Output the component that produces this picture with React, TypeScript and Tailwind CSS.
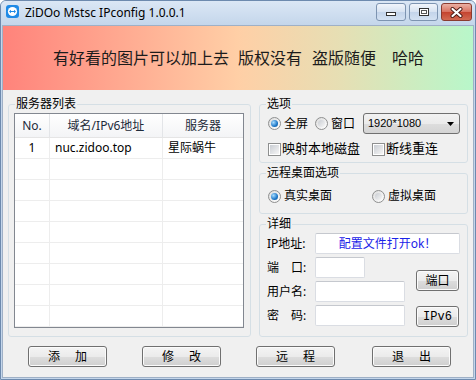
import type { ReactNode } from 'react'

const cjk = "font-['Noto_Sans','Noto_Sans_CJK_SC',sans-serif]"

function Radio({ checked }: { checked?: boolean }) {
  return (
    <span className="flex h-[13px] w-[13px] shrink-0 items-center justify-center rounded-full border border-[#8e8f8f] bg-[linear-gradient(135deg,#dcdcdc,#ffffff)]">
      {checked ? (
        <span className="h-[7px] w-[7px] rounded-full bg-[radial-gradient(circle_at_35%_35%,#a8ddff,#1d77c8_60%,#0b4d89)]" />
      ) : (
        <span className="h-[7px] w-[7px] rounded-full bg-[linear-gradient(135deg,#c9cdd3,#f6f6f6)]" />
      )}
    </span>
  )
}

function Check() {
  return (
    <span className="flex h-[13px] w-[13px] shrink-0 items-center justify-center border border-[#8e8f8f] bg-white">
      <span className="h-[9px] w-[9px] bg-[linear-gradient(135deg,#c9cdd3,#f6f6f6)]" />
    </span>
  )
}

function Group({ title, className, children }: { title: string; className: string; children: ReactNode }) {
  return (
    <fieldset className={`rounded-[3px] border border-[#d5dfe5] ${className}`}>
      <legend className="ml-[6px] px-[1px] text-[12px] leading-[14px] text-black">{title}</legend>
      {children}
    </fieldset>
  )
}

function WinButton({ children, className }: { children: ReactNode; className: string }) {
  return (
    <div
      className={`flex h-[21px] items-center justify-center rounded-[3px] border border-[#707070] bg-[linear-gradient(to_bottom,#f4f4f4_0%,#ebebeb_50%,#dddddd_51%,#cfcfcf_100%)] text-[12px] text-black shadow-[inset_0_0_0_1px_#fbfbfb] ${className}`}
    >
      {children}
    </div>
  )
}

function TextBox({ className, children }: { className: string; children?: ReactNode }) {
  return (
    <div className={`flex h-[21px] items-center justify-center rounded-[2px] border border-[#dadde3] border-t-[#c5c8ce] bg-white ${className}`}>
      {children}
    </div>
  )
}

const rows = Array.from({ length: 9 }, (_, i) => i)

export default function App() {
  return (
    <div className={`h-[380px] w-[476px] overflow-hidden rounded-t-[6px] border border-[#6d8aae] bg-[#c4d6eb] ${cjk}`}>
      {/* title bar */}
      <div className="flex h-[24px] items-start bg-[linear-gradient(to_bottom,#dbe7f5,#c4d6eb)]">
        <svg width="13" height="13" viewBox="0 0 13 13" className="ml-[5px] mt-[4px]">
          <rect x="0" y="0" width="13" height="13" rx="3" fill="#1f8ae6" />
          <circle cx="6.5" cy="6.5" r="4.6" fill="#fff" />
          <path d="M3 6.5 L5 4.8 V5.9 H8 V4.8 L10 6.5 L8 8.2 V7.1 H5 V8.2 Z" fill="#1f8ae6" />
        </svg>
        <span className="ml-[6px] mt-[4px] text-[12px] leading-[16px] text-black">ZiDOo Mstsc IPconfig 1.0.0.1</span>
        <div className="ml-auto mr-[3px] mt-[2px] flex gap-[3px]">
          <div className="flex h-[18px] w-[30px] items-end justify-center rounded-[3px] border border-[#7d94b1] bg-[linear-gradient(to_bottom,#f1f5fb,#d6e2f1_50%,#c3d4ea_51%,#d3e1f2)] pb-[4px]">
            <span className="h-[4px] w-[10px] border border-[#333] bg-white" />
          </div>
          <div className="flex h-[18px] w-[29px] items-center justify-center rounded-[3px] border border-[#7d94b1] bg-[linear-gradient(to_bottom,#f1f5fb,#d6e2f1_50%,#c3d4ea_51%,#d3e1f2)]">
            <span className="flex h-[8px] w-[10px] items-center justify-center border border-[#333] bg-white">
              <span className="h-[4px] w-[6px] border border-[#555]" />
            </span>
          </div>
          <div className="flex h-[18px] w-[31px] items-center justify-center rounded-[3px] border border-[#8a3b30] bg-[linear-gradient(to_bottom,#eab0a3,#d8705f_50%,#c4432f_51%,#d26a52)]">
            <svg width="13" height="11" viewBox="0 0 13 11">
              <path d="M2.5 2 L10.5 9 M10.5 2 L2.5 9" stroke="#4a1a14" strokeWidth="4" strokeLinecap="round" />
              <path d="M2.5 2 L10.5 9 M10.5 2 L2.5 9" stroke="#fff" strokeWidth="2.2" strokeLinecap="round" />
            </svg>
          </div>
        </div>
      </div>

      {/* client area */}
      <div className="ml-[1px] h-[353px] w-[472px] border border-[#9fb0c6] bg-[#f0f0f0]">
        <div className="flex h-[64px] items-center bg-[linear-gradient(to_right,#ff837b,#ffcfa6_50%,#e6dfb4_72%,#b8f7ca)] pl-[50px] text-[16px] text-[#1c1c1c]">
          <span>有好看的图片可以加上去</span>
          <span className="ml-[9px]">版权没有</span>
          <span className="ml-[10px]">盗版随便</span>
          <span className="ml-[16px]">哈哈</span>
        </div>

        <div className="flex pl-[5px] pt-[7px]">
          {/* server list */}
          <Group title="服务器列表" className="h-[240px] w-[243px]">
            <div className="pl-[5px] pt-[2px]">
              <div className="h-[215px] w-[230px] overflow-hidden border border-[#828790] bg-white text-[12px] text-black">
                <div className="flex h-[24px] border-b border-[#e5e5e5] bg-[linear-gradient(to_bottom,#ffffff,#f3f4f6)] text-[#1e2b3a]">
                  <div className="flex w-[35px] items-center justify-center border-r border-[#e3e5e8]">No.</div>
                  <div className="flex w-[113px] items-center justify-center border-r border-[#e3e5e8]">域名/IPv6地址</div>
                  <div className="flex flex-1 items-center justify-center">服务器</div>
                </div>
                {rows.map((i) => (
                  <div key={i} className="flex h-[21px] border-b border-[#ededed]">
                    <div className="flex w-[35px] items-center justify-center border-r border-[#ededed]">{i === 0 ? '1' : ''}</div>
                    <div className="flex w-[113px] items-center border-r border-[#ededed] pl-[5px]">{i === 0 ? 'nuc.zidoo.top' : ''}</div>
                    <div className="flex flex-1 items-center pl-[5px]">{i === 0 ? '星际蜗牛' : ''}</div>
                  </div>
                ))}
              </div>
            </div>
          </Group>

          {/* right column */}
          <div className="ml-[8px] flex w-[209px] flex-col">
            <Group title="选项" className="h-[66px]">
              <div className="pl-[8px] pt-[2px] text-[12px] text-black">
                <div className="flex h-[21px] items-center">
                  <div className="flex w-[47px] items-center gap-[3px]">
                    <Radio checked />
                    <span>全屏</span>
                  </div>
                  <div className="flex w-[48px] items-center gap-[3px]">
                    <Radio />
                    <span>窗口</span>
                  </div>
                  <div className="flex h-[21px] w-[97px] items-center justify-between rounded-[3px] border border-[#707070] bg-[linear-gradient(to_bottom,#f2f2f2_0%,#ebebeb_50%,#dddddd_51%,#d4d4d4_100%)] pl-[4px] pr-[5px] font-['Liberation_Sans',sans-serif] text-[11px]">
                    <span>1920*1080</span>
                    <svg width="7" height="4" viewBox="0 0 7 4">
                      <path d="M0 0 H7 L3.5 4 Z" fill="#000" />
                    </svg>
                  </div>
                </div>
                <div className="mt-[5px] flex h-[20px] items-center text-[13px]">
                  <div className="flex w-[104px] items-center gap-[1px]">
                    <Check />
                    <span>映射本地磁盘</span>
                  </div>
                  <div className="flex items-center gap-[1px]">
                    <Check />
                    <span>断线重连</span>
                  </div>
                </div>
              </div>
            </Group>

            <Group title="远程桌面选项" className="mt-[3px] h-[48px]">
              <div className="flex h-[20px] items-center pl-[8px] pt-[0px] text-[12px] text-black mt-[6px]">
                <div className="flex w-[104px] items-center gap-[3px]">
                  <Radio checked />
                  <span>真实桌面</span>
                </div>
                <div className="flex items-center gap-[3px]">
                  <Radio />
                  <span>虚拟桌面</span>
                </div>
              </div>
            </Group>

            <Group title="详细" className="mt-[3px] h-[120px]">
              <div className="pl-[7px] pt-[2px] text-[12px] text-black">
                <div className="flex h-[21px] items-center">
                  <span className="w-[48px]">IP地址:</span>
                  <TextBox className="w-[145px] text-[#1a22e8]">配置文件打开ok！</TextBox>
                </div>
                <div className="mt-[3px] flex">
                  <div className="flex flex-col gap-[3px]">
                    <div className="flex h-[21px] items-center">
                      <span className="w-[48px]">端　口:</span>
                      <TextBox className="w-[50px]" />
                    </div>
                    <div className="flex h-[21px] items-center">
                      <span className="w-[48px]">用户名:</span>
                      <TextBox className="w-[90px]" />
                    </div>
                    <div className="flex h-[21px] items-center">
                      <span className="w-[48px]">密　码:</span>
                      <TextBox className="w-[90px]" />
                    </div>
                  </div>
                  <div className="ml-[11px] flex flex-col">
                    <WinButton className="mt-[13px] h-[20px] w-[43px]">端口</WinButton>
                    <WinButton className="mt-[15px] w-[43px] font-['Liberation_Mono',monospace]">IPv6</WinButton>
                  </div>
                </div>
              </div>
            </Group>
          </div>
        </div>

        {/* bottom buttons */}
        <div className="mt-[9px] flex pl-[25px]">
          <WinButton className="w-[79px] gap-[15px]">
            <span>添</span>
            <span>加</span>
          </WinButton>
          <WinButton className="ml-[35px] w-[79px] gap-[15px]">
            <span>修</span>
            <span>改</span>
          </WinButton>
          <WinButton className="ml-[35px] w-[79px] gap-[15px]">
            <span>远</span>
            <span>程</span>
          </WinButton>
          <WinButton className="ml-[37px] w-[79px] gap-[15px]">
            <span>退</span>
            <span>出</span>
          </WinButton>
        </div>
      </div>
    </div>
  )
}
